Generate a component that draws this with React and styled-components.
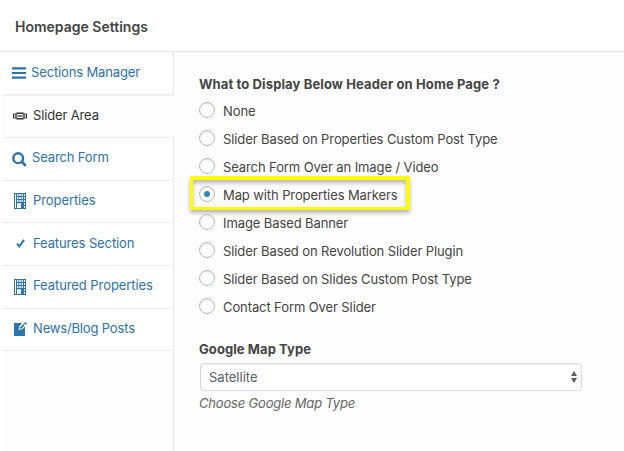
import React from 'react';
import styled, { createGlobalStyle } from 'styled-components';

const Global = createGlobalStyle`
  * { box-sizing: border-box; }
  body { margin: 0; background: #fff; font-family: Inter, "Liberation Sans", sans-serif; font-size: 13px; color: #444; }
`;

const Page = styled.div`
  width: 624px;
  height: 451px;
  display: flex;
  flex-direction: column;
  overflow: hidden;
  background: #fff;
`;

const Header = styled.header`
  height: 52px;
  flex: none;
  padding: 3px 15px 0;
  display: flex;
  align-items: center;
  border-bottom: 1px solid #e2e2e2;
`;

const Text = styled.span`
  white-space: nowrap;
  letter-spacing: ${(p) => p.$ls || 0}px;
`;

const PageTitle = styled.h1`
  margin: 0;
  font-size: 14px;
  line-height: 20px;
  font-weight: 600;
  color: #444;
`;

const Body = styled.div`
  flex: 1;
  display: flex;
  padding-left: 2px;
`;

const Sidebar = styled.nav`
  width: 172px;
  flex: none;
  display: flex;
  flex-direction: column;
  background: #fefefe;
`;

const Tab = styled.a`
  height: ${(p) => p.$h}px;
  flex: none;
  display: flex;
  padding-left: ${(p) => p.$pad}px;
  padding-top: ${(p) => p.$top}px;
  line-height: 18px;
  color: ${(p) => (p.$active ? '#333' : '#2c72ab')};
  background: ${(p) => (p.$active ? '#fdfdfd' : '#fff')};
  border-bottom: 1px solid #ebebeb;
  border-right: 1px solid ${(p) => (p.$active ? '#fdfdfd' : '#e8e8e8')};
  box-shadow: ${(p) => (p.$active ? 'inset 0 1px 0 #f1f1f1' : 'none')};
`;

const IconSlot = styled.span`
  width: ${(p) => p.$w}px;
  flex: none;
  padding-top: ${(p) => p.$top}px;
  svg { display: block; }
`;

const SidebarRest = styled.div`
  flex: 1;
  border-right: 1px solid #e8e8e8;
`;

const Content = styled.main`
  flex: 1;
  background: #fdfdfd;
  padding: 22px 0 0 25px;
`;

const Label = styled.div`
  font-weight: 700;
  line-height: 20px;
  color: #444;
`;

const Options = styled.div`
  display: flex;
  flex-direction: column;
  align-items: flex-start;
  padding-top: 3px;
  margin-bottom: 18px;
`;

const Option = styled.label`
  position: relative;
  height: 28px;
  display: flex;
  align-items: center;
  gap: 8px;
`;

const Radio = styled.span`
  width: 16px;
  height: 16px;
  margin-top: -2px;
  border: 1px solid #b4b9be;
  border-radius: 50%;
  background: #fff;
  box-shadow: inset 0 1px 2px rgba(0, 0, 0, 0.1);
  display: flex;
  align-items: center;
  justify-content: center;
`;

const Dot = styled.span`
  width: 6px;
  height: 6px;
  border-radius: 50%;
  background: #2e86c0;
`;

const Highlight = styled.span`
  position: absolute;
  left: -9px;
  top: -5px;
  width: 220px;
  height: 34px;
  border: 4px solid #ffff00;
  border-left-width: 3px;
  border-bottom-width: 3px;
  box-shadow: 0 3px 4px rgba(0, 0, 0, 0.28), inset 0 3px 4px rgba(0, 0, 0, 0.28);
`;

const Select = styled.div`
  width: 382px;
  height: 28px;
  margin: 4px 0 2px 1px;
  padding: 0 4px 0 8px;
  display: flex;
  align-items: center;
  justify-content: space-between;
  color: #555d66;
  background: #fff;
  border: 1px solid #d9d9d9;
  border-radius: 4px;
  box-shadow: inset 0 1px 2px rgba(0, 0, 0, 0.07);
`;

const Hint = styled.div`
  font-style: italic;
  line-height: 20px;
  color: #666;
`;

const MenuIcon = () => (
  <svg width="14" height="12" viewBox="0 0 14 12" fill="#2c72ab">
    <path d="M0 .2h14v2.2H0zM0 4.9h14v2.2H0zM0 9.6h14v2.2H0z" />
  </svg>
);

const SliderIcon = () => (
  <svg width="14" height="8" viewBox="0 0 14 8" fill="#333">
    <path d="M0 1.5h1v5H0zM1.7 1h1v6h-1zM11.3 1h1v6h-1zM13 1.5h1v5h-1z" />
    <path fillRule="evenodd" d="M3.3 0.5h7.4v7H3.3zM4.3 2v4h5.4V2z" />
    <path d="M5 3h4v2H5z" opacity=".65" />
  </svg>
);

const SearchIcon = () => (
  <svg width="15" height="15" viewBox="0 0 15 15" fill="none" stroke="#2c72ab">
    <circle cx="6.2" cy="6.2" r="4.9" strokeWidth="2.4" />
    <path d="M9.8 9.8l4 4" strokeWidth="2.7" />
  </svg>
);

const BuildingIcon = () => (
  <svg width="12" height="16" viewBox="0 0 12 16" fill="#2c72ab">
    <path
      fillRule="evenodd"
      d="M0 0h12v16H0zM1 1v14h1V1zM3 1v2h1.4V1zM5.3 1v2h1.4V1zM7.6 1v2h1.4V1zM10 1v2h1V1zM3 4v2h1.4V4zM5.3 4v2h1.4V4zM7.6 4v2h1.4V4zM10 4v2h1V4zM3 7v2h1.4V7zM5.3 7v2h1.4V7zM7.6 7v2h1.4V7zM10 7v2h1V7zM3 10.3V15h4v-4.7zM10 10v2h1v-2zM10 13v2h1v-2z"
    />
  </svg>
);

const CheckIcon = () => (
  <svg width="9" height="9" viewBox="0 0 9 9" fill="none" stroke="#2c72ab" strokeWidth="2">
    <path d="M1 4.5l2.3 2.9L8 .8" />
  </svg>
);

const EditIcon = () => (
  <svg width="13" height="14" viewBox="0 0 13 14">
    <path d="M0 1h8.2L5.2 4.2 4.5 8l3.7-.8L11 4.5V14H0z" fill="#2c72ab" />
    <path d="M5.6 7l.5-1.8L9.3 2l1.3 1.3-3.2 3.2zM10 1.3L11.3 0 13 1.5l-1.5 1.2z" fill="#2c72ab" />
  </svg>
);

const ArrowsIcon = () => (
  <svg width="6" height="12" viewBox="0 0 6 12" fill="#555d66">
    <path d="M3 0l3 5H0zM0 7h6l-3 5z" />
  </svg>
);

const tabs = [
  { label: 'Sections Manager', icon: MenuIcon, h: 43, pad: 10, w: 19, top: 11, iconTop: 4, ls: -0.14 },
  { label: 'Slider Area', icon: SliderIcon, h: 43, pad: 11, w: 20, top: 11, iconTop: 6, active: true, ls: -0.14 },
  { label: 'Search Form', icon: SearchIcon, h: 43, pad: 10, w: 20, top: 10, iconTop: 4, ls: -0.14 },
  { label: 'Properties', icon: BuildingIcon, h: 42, pad: 12, w: 19, top: 10, iconTop: 2, ls: -0.08 },
  { label: 'Features Section', icon: CheckIcon, h: 43, pad: 14, w: 17, top: 11, iconTop: 5, ls: -0.11 },
  { label: 'Featured Properties', icon: BuildingIcon, h: 43, pad: 12, w: 19, top: 10, iconTop: 3, ls: -0.07 },
  { label: 'News/Blog Posts', icon: EditIcon, h: 42, pad: 12, w: 19, top: 10, iconTop: 3, ls: -0.16 },
];

const options = [
  { label: 'None' },
  { label: 'Slider Based on Properties Custom Post Type' },
  { label: 'Search Form Over an Image / Video' },
  { label: 'Map with Properties Markers', checked: true },
  { label: 'Image Based Banner' },
  { label: 'Slider Based on Revolution Slider Plugin' },
  { label: 'Slider Based on Slides Custom Post Type' },
  { label: 'Contact Form Over Slider' },
];

export default function App() {
  return (
    <Page>
      <Global />
      <Header>
        <PageTitle><Text>Homepage Settings</Text></PageTitle>
      </Header>
      <Body>
        <Sidebar>
          {tabs.map(({ label, icon: Icon, h, pad, w, top, iconTop, active, ls }) => (
            <Tab key={label} $h={h} $pad={pad} $top={top} $active={active}>
              <IconSlot $w={w} $top={iconTop}><Icon /></IconSlot>
              <Text $ls={ls}>{label}</Text>
            </Tab>
          ))}
          <SidebarRest />
        </Sidebar>
        <Content>
          <Label><Text $ls={0.12}>What to Display Below Header on Home Page ?</Text></Label>
          <Options>
            {options.map(({ label, checked }) => (
              <Option key={label}>
                <Radio>{checked && <Dot />}</Radio>
                <Text $ls={-0.1}>{label}</Text>
                {checked && <Highlight />}
              </Option>
            ))}
          </Options>
          <Label><Text $ls={0.08}>Google Map Type</Text></Label>
          <Select><Text>Satellite</Text><ArrowsIcon /></Select>
          <Hint><Text $ls={-0.18}>Choose Google Map Type</Text></Hint>
        </Content>
      </Body>
    </Page>
  );
}
